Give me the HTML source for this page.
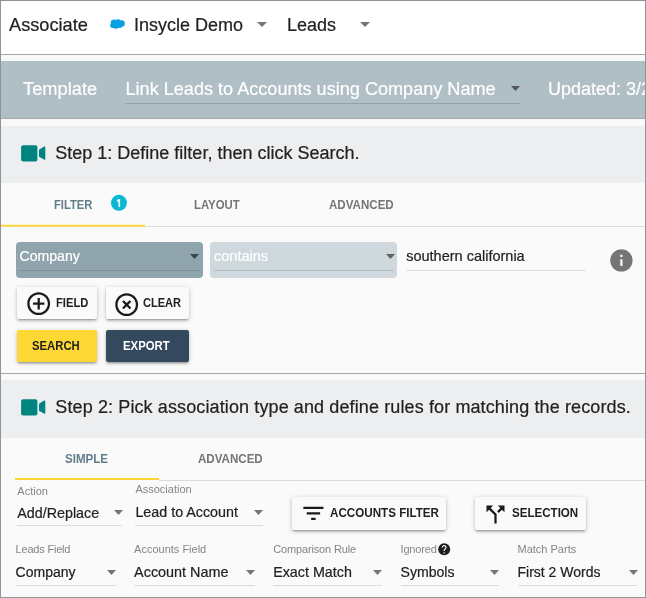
<!DOCTYPE html>
<html><head><meta charset="utf-8"><style>
html,body{margin:0;padding:0;background:#fafafa;}
body{width:646px;height:598px;overflow:hidden;position:relative;font-family:"Liberation Sans",sans-serif;}
#f{position:absolute;left:0;top:0;width:646px;height:598px;overflow:hidden;will-change:transform;}
#f>div,#f>span,#f>svg{position:absolute;display:block;}
.t{white-space:nowrap;-webkit-text-stroke:0.2px currentColor;}.b{-webkit-text-stroke:0;}
#b{position:absolute;left:0;top:0;width:644px;height:596px;border:1px solid #8f9497;z-index:10;}
</style></head><body><div id="f">
<div style="left:1px;top:1px;width:644px;height:53px;background:#fff"></div>
<div style="left:1px;top:54px;width:644px;height:1px;background:#a8a8a8"></div>
<div style="left:1px;top:55px;width:644px;height:6px;background:#f8f8f8"></div>
<span class="t" style="left:9px;top:15.59px;font-size:18.2px;line-height:18.2px;color:#212121;font-weight:400;">Associate</span>
<svg style="left:110px;top:19px" width="15" height="10" viewBox="0 0 15 10"><g fill="#08a0e0"><ellipse cx="4" cy="3.6" rx="3.2" ry="3"/><ellipse cx="8" cy="3" rx="3" ry="2.8"/><ellipse cx="11.6" cy="4.4" rx="3.2" ry="3.2"/><ellipse cx="3" cy="6.3" rx="2.8" ry="2.8"/><ellipse cx="6" cy="6.8" rx="3" ry="2.9"/><ellipse cx="9.5" cy="6.2" rx="3.2" ry="2.6"/></g></svg>
<span class="t" style="left:134px;top:15.76px;font-size:18px;line-height:18px;color:#212121;font-weight:400;">Insycle Demo</span>
<svg style="left:257px;top:22px" width="10" height="5" viewBox="0 0 10 5" preserveAspectRatio="none"><path d="M0 0H10L5 5z" fill="#757575"/></svg>
<span class="t" style="left:287px;top:15.76px;font-size:18px;line-height:18px;color:#212121;font-weight:400;">Leads</span>
<svg style="left:360px;top:22px" width="10" height="5" viewBox="0 0 10 5" preserveAspectRatio="none"><path d="M0 0H10L5 5z" fill="#757575"/></svg>
<div style="left:1px;top:61px;width:644px;height:57px;background:#b0bec5"></div>
<div style="left:1px;top:118px;width:644px;height:1px;background:#a4a9ac"></div>
<div style="left:1px;top:119px;width:644px;height:7px;background:#f9f9f9"></div>
<span class="t" style="left:23px;top:79.91px;font-size:18.3px;line-height:18.3px;color:#fff;font-weight:400;">Template</span>
<span class="t" style="left:125.5px;top:80.07px;font-size:18.1px;line-height:18.1px;color:#fff;font-weight:400;">Link Leads to Accounts using Company Name</span>
<div style="left:125px;top:103px;width:395px;height:1px;background:#94a3aa"></div>
<svg style="left:511px;top:86px" width="9" height="5" viewBox="0 0 10 5" preserveAspectRatio="none"><path d="M0 0H10L5 5z" fill="#555"/></svg>
<span class="t" style="left:548px;top:80.16px;font-size:18px;line-height:18px;color:#fff;font-weight:400;">Updated: 3/22/2019</span>
<div style="left:1px;top:125.5px;width:644px;height:58px;background:#edeef0"></div>
<svg style="left:21px;top:144.5px" width="25" height="17" viewBox="0 0 25 17"><rect x="0.1" y="0.2" width="16.3" height="16.3" rx="2" fill="#008480"/><path d="M18 4.7L23 1.6Q24.3 0.9 24.3 2.4V13.8Q24.3 15.3 23 14.5L18 11.8z" fill="#008480"/></svg>
<span class="t" style="left:55.3px;top:143.66px;font-size:18px;line-height:18px;color:#212121;font-weight:400;">Step 1: Define filter, then click Search.</span>
<div style="left:1px;top:183px;width:644px;height:190px;background:#fafafa"></div>
<span class="t b" style="left:54px;top:197.99px;font-size:13px;line-height:13px;color:#607d8b;font-weight:700;transform:scaleX(0.86);transform-origin:0 0;">FILTER</span>
<svg style="left:105px;top:190px" width="30" height="25" viewBox="105 190 30 25"><circle cx="118.95" cy="202.8" r="8" fill="#0bb8d4"/><path d="M118.4 199.1H120.1V207H118.5V201.3L116.9 201.9V200.6z" fill="#fff"/></svg>
<span class="t b" style="left:194.3px;top:197.99px;font-size:13px;line-height:13px;color:#757575;font-weight:700;transform:scaleX(0.875);transform-origin:0 0;">LAYOUT</span>
<span class="t b" style="left:328.8px;top:197.99px;font-size:13px;line-height:13px;color:#757575;font-weight:700;transform:scaleX(0.89);transform-origin:0 0;">ADVANCED</span>
<div style="left:145px;top:226px;width:500px;height:1px;background:#dcdcdc"></div>
<div style="left:1px;top:225px;width:144px;height:1px;background:#fdd835"></div>
<div style="left:1px;top:226px;width:144px;height:1px;background:#f6dc75"></div>
<div style="left:1px;top:224px;width:144px;height:1px;background:#fbf3d0"></div>
<div style="left:16px;top:242px;width:187px;height:36px;border-radius:4px;background:#90a4ae"></div>
<span class="t" style="left:19.5px;top:249.06px;font-size:14.1px;line-height:14.1px;color:#fff;font-weight:400;">Company</span>
<div style="left:19px;top:270px;width:180px;height:1px;background:#7d8f98"></div>
<svg style="left:190px;top:254px" width="9" height="5" viewBox="0 0 10 5" preserveAspectRatio="none"><path d="M0 0H10L5 5z" fill="#37474f"/></svg>
<div style="left:210px;top:242px;width:187px;height:36px;border-radius:4px;background:#cfd8dc"></div>
<span class="t" style="left:214px;top:248.72px;font-size:14.5px;line-height:14.5px;color:#fff;font-weight:400;">contains</span>
<div style="left:214px;top:270px;width:180px;height:1px;background:#b2bcc0"></div>
<svg style="left:385.5px;top:254px" width="9.0" height="5" viewBox="0 0 10 5" preserveAspectRatio="none"><path d="M0 0H10L5 5z" fill="#616161"/></svg>
<span class="t" style="left:406.2px;top:249.12px;font-size:14.5px;line-height:14.5px;color:#212121;font-weight:400;">southern california</span>
<div style="left:406px;top:270px;width:180px;height:1px;background:#dcdcdc"></div>
<svg style="left:607.5px;top:246.9px" width="26.8" height="26.8" viewBox="0 0 24 24"><path fill="#757575" d="M12 2C6.48 2 2 6.48 2 12s4.48 10 10 10 10-4.48 10-10S17.52 2 12 2zm1 15h-2v-6h2v6zm0-8h-2V7h2v2z"/></svg>
<div style="left:17px;top:287px;width:80px;height:32px;background:#fafafa;box-shadow:0 1px 5px rgba(0,0,0,.2),0 2px 2px rgba(0,0,0,.14),0 3px 1px -2px rgba(0,0,0,.12);border-radius:2px;"></div>
<svg style="left:24.8px;top:290.1px" width="27.4" height="27.4" viewBox="0 0 24 24"><path fill="#1a1a1a" d="M13 7h-2v4H7v2h4v4h2v-4h4v-2h-4V7zm-1-5C6.48 2 2 6.48 2 12s4.48 10 10 10 10-4.48 10-10S17.52 2 12 2zm0 18c-4.41 0-8-3.59-8-8s3.59-8 8-8 8 3.59 8 8-3.59 8-8 8z"/></svg>
<span class="t b" style="left:56.2px;top:296.19px;font-size:13px;line-height:13px;color:#212121;font-weight:700;transform:scaleX(0.86);transform-origin:0 0;">FIELD</span>
<div style="left:106px;top:287px;width:83px;height:32px;background:#fafafa;box-shadow:0 1px 5px rgba(0,0,0,.2),0 2px 2px rgba(0,0,0,.14),0 3px 1px -2px rgba(0,0,0,.12);border-radius:2px;"></div>
<svg style="left:112.6px;top:290.9px" width="27.4" height="27.4" viewBox="0 0 24 24"><path fill="#1a1a1a" d="M14.59 8L12 10.59 9.41 8 8 9.41 10.59 12 8 14.59 9.41 16 12 13.41 14.59 16 16 14.59 13.41 12 16 9.41 14.59 8zM12 2C6.47 2 2 6.47 2 12s4.47 10 10 10 10-4.47 10-10S17.53 2 12 2zm0 18c-4.41 0-8-3.59-8-8s3.59-8 8-8 8 3.59 8 8-3.59 8-8 8z"/></svg>
<span class="t b" style="left:142.9px;top:296.19px;font-size:13px;line-height:13px;color:#212121;font-weight:700;transform:scaleX(0.85);transform-origin:0 0;">CLEAR</span>
<div style="left:17px;top:330px;width:80px;height:32px;background:#fdd835;box-shadow:0 1px 5px rgba(0,0,0,.2),0 2px 2px rgba(0,0,0,.14),0 3px 1px -2px rgba(0,0,0,.12);border-radius:2px;"></div>
<span class="t b" style="left:32.3px;top:339.19px;font-size:13px;line-height:13px;color:#212121;font-weight:700;transform:scaleX(0.87);transform-origin:0 0;">SEARCH</span>
<div style="left:106px;top:330px;width:83px;height:32px;background:#34495e;box-shadow:0 1px 5px rgba(0,0,0,.2),0 2px 2px rgba(0,0,0,.14),0 3px 1px -2px rgba(0,0,0,.12);border-radius:2px;"></div>
<span class="t b" style="left:123.1px;top:339.19px;font-size:13px;line-height:13px;color:#fff;font-weight:700;transform:scaleX(0.875);transform-origin:0 0;">EXPORT</span>
<div style="left:1px;top:373px;width:644px;height:1px;background:#a6a6a6"></div>
<div style="left:1px;top:374px;width:644px;height:6px;background:#f9f9f9"></div>
<div style="left:1px;top:379.5px;width:644px;height:58px;background:#edeef0"></div>
<svg style="left:21px;top:398.5px" width="25" height="17" viewBox="0 0 25 17"><rect x="0.1" y="0.2" width="16.3" height="16.3" rx="2" fill="#008480"/><path d="M18 4.7L23 1.6Q24.3 0.9 24.3 2.4V13.8Q24.3 15.3 23 14.5L18 11.8z" fill="#008480"/></svg>
<span class="t" style="left:55.3px;top:398.26px;font-size:18px;line-height:18px;color:#212121;font-weight:400;letter-spacing:0.115px;">Step 2: Pick association type and define rules for matching the records.</span>
<div style="left:1px;top:437.5px;width:644px;height:160px;background:#fafafa"></div>
<span class="t b" style="left:64.7px;top:452.49px;font-size:13px;line-height:13px;color:#607d8b;font-weight:700;transform:scaleX(0.89);transform-origin:0 0;">SIMPLE</span>
<span class="t b" style="left:198.3px;top:452.49px;font-size:13px;line-height:13px;color:#757575;font-weight:700;transform:scaleX(0.89);transform-origin:0 0;">ADVANCED</span>
<div style="left:159px;top:480px;width:486px;height:1px;background:#dcdcdc"></div>
<div style="left:15px;top:478px;width:144px;height:2px;background:#fdd835"></div>
<span class="t" style="left:17.3px;top:486.09px;font-size:11px;line-height:11px;color:#848484;font-weight:400;letter-spacing:0px;-webkit-text-stroke:0;">Action</span>
<span class="t" style="left:17.3px;top:505.79px;font-size:14.3px;line-height:14.3px;color:#212121;font-weight:400;">Add/Replace</span>
<svg style="left:114.2px;top:510px" width="9.0" height="5" viewBox="0 0 10 5" preserveAspectRatio="none"><path d="M0 0H10L5 5z" fill="#757575"/></svg>
<div style="left:17.3px;top:525px;width:105.2px;height:1px;background:#dcdcdc"></div>
<span class="t" style="left:135.4px;top:483.59px;font-size:11px;line-height:11px;color:#848484;font-weight:400;letter-spacing:0px;-webkit-text-stroke:0;">Association</span>
<span class="t" style="left:135.4px;top:504.79px;font-size:14.3px;line-height:14.3px;color:#212121;font-weight:400;">Lead to Account</span>
<svg style="left:254.3px;top:509.8px" width="9.0" height="4.999999999999943" viewBox="0 0 10 5" preserveAspectRatio="none"><path d="M0 0H10L5 5z" fill="#757575"/></svg>
<div style="left:135.4px;top:524.5px;width:127.6px;height:1px;background:#dcdcdc"></div>
<div style="left:292px;top:497px;width:154px;height:33px;background:#fafafa;box-shadow:0 1px 5px rgba(0,0,0,.2),0 2px 2px rgba(0,0,0,.14),0 3px 1px -2px rgba(0,0,0,.12);border-radius:2px;"></div>
<svg style="left:299.5px;top:500.4px" width="26.8" height="26.8" viewBox="0 0 24 24"><path fill="#1a1a1a" d="M10 18h4v-2h-4v2zM3 6v2h18V6H3zm3 7h12v-2H6v2z"/></svg>
<span class="t b" style="left:330px;top:506.19px;font-size:13px;line-height:13px;color:#212121;font-weight:700;transform:scaleX(0.895);transform-origin:0 0;">ACCOUNTS FILTER</span>
<div style="left:475px;top:497px;width:111px;height:33px;background:#fafafa;box-shadow:0 1px 5px rgba(0,0,0,.2),0 2px 2px rgba(0,0,0,.14),0 3px 1px -2px rgba(0,0,0,.12);border-radius:2px;"></div>
<svg style="left:481.7px;top:500.5px" width="27" height="27" viewBox="0 0 24 24"><path fill="#1a1a1a" d="M14 4l2.29 2.29-2.88 2.88 1.42 1.42 2.88-2.88L20 10V4zm-4 0H4v6l2.29-2.29 4.71 4.7V20h2v-8.41l-5.29-5.3z"/></svg>
<span class="t b" style="left:512.2px;top:506.19px;font-size:13px;line-height:13px;color:#212121;font-weight:700;transform:scaleX(0.89);transform-origin:0 0;">SELECTION</span>
<span class="t" style="left:15.6px;top:544.29px;font-size:11px;line-height:11px;color:#848484;font-weight:400;letter-spacing:-0.2px;-webkit-text-stroke:0;">Leads Field</span>
<span class="t" style="left:15.6px;top:564.95px;font-size:14px;line-height:14px;color:#212121;font-weight:400;">Company</span>
<svg style="left:107.3px;top:570.3px" width="9.0" height="5.0" viewBox="0 0 10 5" preserveAspectRatio="none"><path d="M0 0H10L5 5z" fill="#757575"/></svg>
<div style="left:15.6px;top:585px;width:100.4px;height:1px;background:#dcdcdc"></div>
<span class="t" style="left:134.1px;top:544.29px;font-size:11px;line-height:11px;color:#848484;font-weight:400;letter-spacing:0px;-webkit-text-stroke:0;">Accounts Field</span>
<span class="t" style="left:134.1px;top:564.61px;font-size:14.4px;line-height:14.4px;color:#212121;font-weight:400;">Account Name</span>
<svg style="left:246.4px;top:570.3px" width="9.0" height="5.0" viewBox="0 0 10 5" preserveAspectRatio="none"><path d="M0 0H10L5 5z" fill="#757575"/></svg>
<div style="left:134.1px;top:585px;width:120.9px;height:1px;background:#dcdcdc"></div>
<span class="t" style="left:273.2px;top:544.29px;font-size:11px;line-height:11px;color:#848484;font-weight:400;letter-spacing:-0.15px;-webkit-text-stroke:0;">Comparison Rule</span>
<span class="t" style="left:273.2px;top:564.69px;font-size:14.3px;line-height:14.3px;color:#212121;font-weight:400;">Exact Match</span>
<svg style="left:373.4px;top:570.3px" width="9.0" height="5.0" viewBox="0 0 10 5" preserveAspectRatio="none"><path d="M0 0H10L5 5z" fill="#757575"/></svg>
<div style="left:273.2px;top:585px;width:108.80000000000001px;height:1px;background:#dcdcdc"></div>
<span class="t" style="left:400.5px;top:544.29px;font-size:11px;line-height:11px;color:#848484;font-weight:400;letter-spacing:-0.15px;-webkit-text-stroke:0;">Ignored</span>
<span class="t" style="left:400.5px;top:564.86px;font-size:14.1px;line-height:14.1px;color:#212121;font-weight:400;">Symbols</span>
<svg style="left:490.3px;top:570.3px" width="9.0" height="5.0" viewBox="0 0 10 5" preserveAspectRatio="none"><path d="M0 0H10L5 5z" fill="#757575"/></svg>
<div style="left:400.5px;top:585px;width:98.5px;height:1px;background:#dcdcdc"></div>
<svg style="left:437px;top:541.5px" width="14.4" height="14.4" viewBox="0 0 24 24"><circle cx="12" cy="12" r="10" fill="#1c1c1c"/><path fill="#fff" d="M13 19h-2v-2h2v2zm2.07-7.75l-.9.92C13.45 12.9 13 13.5 13 15h-2v-.5c0-1.1.45-2.1 1.17-2.83l1.24-1.26c.37-.36.59-.86.59-1.41 0-1.1-.9-2-2-2s-2 .9-2 2H8c0-2.21 1.79-4 4-4s4 1.79 4 4c0 .88-.36 1.68-.93 2.25z"/></svg>
<span class="t" style="left:517.5px;top:544.29px;font-size:11px;line-height:11px;color:#848484;font-weight:400;letter-spacing:0px;-webkit-text-stroke:0;">Match Parts</span>
<span class="t" style="left:517.5px;top:564.95px;font-size:14px;line-height:14px;color:#212121;font-weight:400;">First 2 Words</span>
<svg style="left:628.5px;top:570.3px" width="9.0" height="5.0" viewBox="0 0 10 5" preserveAspectRatio="none"><path d="M0 0H10L5 5z" fill="#757575"/></svg>
<div style="left:517.5px;top:585px;width:119.5px;height:1px;background:#dcdcdc"></div>
<div id="b"></div>
</div></body></html>
